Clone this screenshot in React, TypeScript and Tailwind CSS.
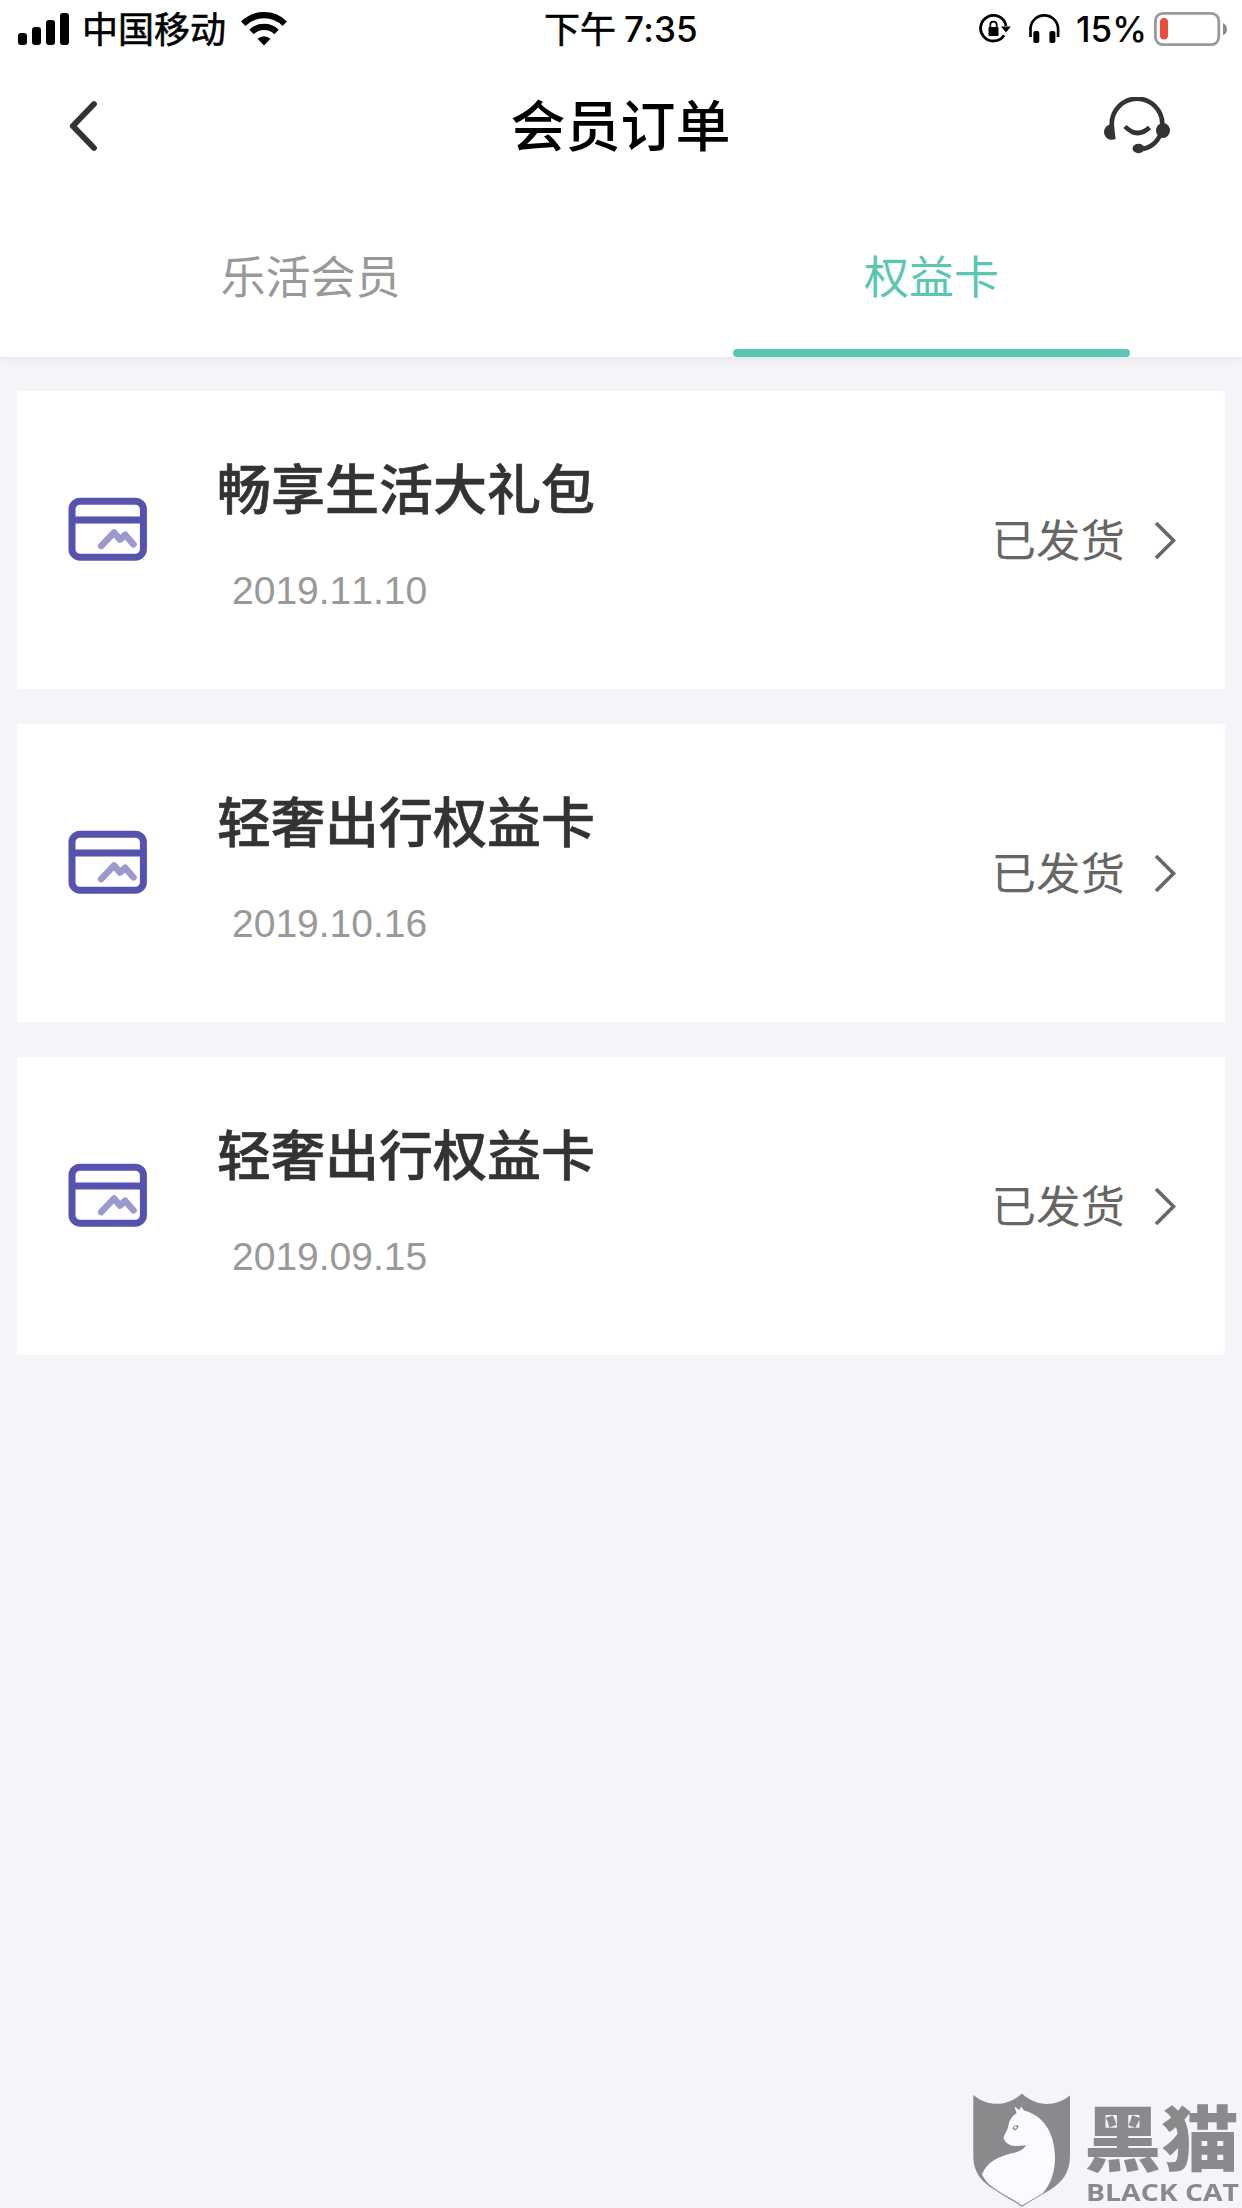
import { ReactNode } from "react";

const orders = [
	{ id: 1, title: "畅享生活大礼包", date: "2019.11.10", status: "已发货" },
	{ id: 2, title: "轻奢出行权益卡", date: "2019.10.16", status: "已发货" },
	{ id: 3, title: "轻奢出行权益卡", date: "2019.09.15", status: "已发货" },
];

function StatusBar() {
	return (
		<div className="flex h-[58px] items-center text-[36px] leading-[58px] text-black">
			<div className="flex flex-1 items-center pl-[18px]">
				<svg width="52" height="34" viewBox="0 0 52 34">
					<rect x="0" y="21" width="9" height="12" rx="3" />
					<rect x="14" y="15" width="9" height="18" rx="3" />
					<rect x="28" y="8" width="9" height="25" rx="3" />
					<rect x="42" y="1" width="9" height="32" rx="3" />
				</svg>
				<span className="ml-[12px] pb-[3px] leading-[55px] [-webkit-text-stroke:0.6px_#000]">中国移动</span>
				<svg className="ml-[15px]" width="46" height="34" viewBox="0 0 46 34">
					<path d="M2.3 11.7a29.5 29.5 0 0 1 41.4 0" fill="none" stroke="#000" strokeWidth="6.3" />
					<path d="M10.5 20a18 18 0 0 1 25 0" fill="none" stroke="#000" strokeWidth="6.3" />
					<path d="M16.5 26.7a9.6 9.6 0 0 1 13 0L23 33.4z" />
				</svg>
			</div>
			<div className="flex items-center pr-[4px]">
				<span className="pb-[3px] leading-[55px] [-webkit-text-stroke:0.6px_#000]">下午</span>
				<span className="ml-[8px] font-['Inter'] text-[35px] font-medium tracking-[0.2px]">7:35</span>
			</div>
			<div className="flex flex-1 items-center justify-end pr-[14px]">
				<svg width="32" height="30" viewBox="0 0 32 30">
					<path d="M25.1 21.2A12.8 12.8 0 1 1 27 12" fill="none" stroke="#000" strokeWidth="2.8" />
					<path d="M22 12.5h9.8L27 18.6z" />
					<rect x="9.5" y="13" width="10" height="9" rx="1" />
					<path d="M11.3 13.5v-2.6a3.2 3.2 0 0 1 6.4 0v2.6" fill="none" stroke="#000" strokeWidth="1.7" />
				</svg>
				<svg className="ml-[18px]" width="31" height="30" viewBox="0 0 31 30">
					<path d="M1.5 23V15a13.8 13.6 0 0 1 27.6 0V23" fill="none" stroke="#000" strokeWidth="2.7" />
					<rect x="4.3" y="17" width="6" height="12" rx="2" />
					<rect x="20.4" y="17" width="6" height="12" rx="2" />
				</svg>
				<span className="ml-[16px] font-['Inter'] text-[35px] font-medium">15%</span>
				<svg className="ml-[7px]" width="74" height="34" viewBox="0 0 74 34">
					<rect x="1.4" y="1.4" width="63.4" height="31.2" rx="7.5" fill="none" stroke="#999" strokeWidth="2.8" />
					<rect x="6" y="6" width="8" height="21.5" rx="4" fill="#eb4d3d" />
					<path d="M69 11q4 2 4 6.2t-4 6.2z" fill="#8c8c8c" />
				</svg>
			</div>
		</div>
	);
}

function NavBar() {
	return (
		<div className="flex h-[136px] items-center justify-between pr-[70px] pl-[68px]">
			<svg width="70" height="54" viewBox="0 0 70 54" fill="none" stroke="#333" strokeWidth="5.8" strokeLinecap="round" strokeLinejoin="round">
				<path d="M26 5L4.800 27 26 49" />
			</svg>
			<h1 className="pb-[7px] pl-px text-[55px] leading-none font-medium text-black">会员订单</h1>
			<svg width="70" height="58" viewBox="0 0 70 58">
				<g fill="none" stroke="#333" strokeWidth="4.6">
					<path d="M9.700 30.500V27a25.300 25.300 0 0 1 50.600 0c0 13-8 22.600-19.300 25" />
					<path d="M23 29.500q12 12.500 24.500 1" />
				</g>
				<path d="M12 27.500c-5-1-9.800 2-10 7.500 0 5.500 5.500 9.600 11.600 7z" fill="#333" />
				<ellipse cx="61" cy="33.500" rx="7" ry="7.500" fill="#333" />
				<ellipse cx="36.500" cy="51.500" rx="6" ry="4.700" fill="#333" />
			</svg>
		</div>
	);
}

function Tab({ active, children }: { active?: boolean; children: ReactNode }) {
	return (
		<div className="flex h-[163px] w-[621px] flex-col items-center justify-between">
			<span className={active ? "pt-[58px] text-[45px] leading-[45px] text-[#5bc6b4]" : "pt-[58px] text-[45px] leading-[45px] text-[#999]"}>
				{children}
			</span>
			{active && <div className="h-[8px] w-[397px] rounded-full bg-[#5bc6b4]" />}
		</div>
	);
}

function CardIcon() {
	return (
		<svg width="80" height="64" viewBox="0 0 80 64" fill="none">
			<rect x="4" y="4.200" width="71.400" height="56" rx="8" stroke="#5553ad" strokeWidth="7" />
			<path d="M4 23h71" stroke="#5553ad" strokeWidth="6.800" />
			<path d="M33.200 49L46 35.500l6 7 5.200-4.700 8.300 9.500" stroke="#9c9acd" strokeWidth="6.600" strokeLinecap="round" strokeLinejoin="round" />
		</svg>
	);
}

function OrderCard(props: any) {
	return (
		<div className="flex h-[298px] bg-white">
			<div className="w-[200px] pt-[106px] pl-[51px]">
				<CardIcon />
			</div>
			<div className="flex-1 pt-[69px]">
				<p className="text-[54px] leading-[54px] font-medium text-[#333] [-webkit-text-stroke:0.6px_#333]">{props.data.title}</p>
				<p className="mt-[55px] ml-[15px] font-['Liberation_Sans'] text-[39px] leading-[44px] text-[#999] [font-kerning:none]">
					{props.data.date}
				</p>
			</div>
			<div className="flex items-center pr-[47px]">
				<span className="pb-[5px] text-[44.5px] leading-[45px] text-[#666]">{props.data.status}</span>
				<svg className="ml-[29px]" width="24" height="40" viewBox="0 0 24 40" fill="none" stroke="#666" strokeWidth="3.600">
					<path d="M2 3L19.500 20.500 2 38" />
				</svg>
			</div>
		</div>
	);
}

function Watermark() {
	return (
		<div className="fixed right-0 bottom-0 flex h-[128px] w-[282px] text-[#8c898c]">
			<svg width="124" height="128" viewBox="0 0 124 128">
				{/* shield */}
				<path
					d="M13.300 15c16 13 35 11 48.700-1.500C75.500 26 94 28 110 15.500V76c0 17-8 26-20 34-10 6-20 11-28 17-8-6-17-10-27-17C22 102 13.300 93 13.300 76z"
					fill="currentColor"
				/>
				{/* cat */}
				<path
					d="M54.500 26.500l5 3.500 1.500-3.500 3 4c20 5 30.500 23 31 46 .3 15-4.500 28-12 36.500L62 125.500c-8-6-17-10-26-16C29 105 24.500 100 22 94.500c5-13 16-17.500 29-21 7-1.800 12-3 15-8.300-6 .8-12 1-15.500 0-4-1.700-6.500-4.500-7-8 1.800-4 4.500-8 5-12 .8-5.500 3.500-9 8-12z"
					fill="#fbfaff"
				/>
				<path d="M52.500 48.500c1-3 3-3.500 6-3-.3 3-2 5.500-4.500 4.500z" fill="currentColor" />
				<circle cx="55.500" cy="47.500" r="1.200" fill="#fff" />
			</svg>
			<div className="flex flex-1 flex-col pt-[16px]">
				<p className="origin-left scale-x-[1.09] text-[71px] leading-[76px] font-black whitespace-nowrap">黑猫</p>
				<svg className="mt-[8px] overflow-visible" width="158" height="28" viewBox="0 0 158 28">
					<text x="2" y="20.500" textLength="153" lengthAdjust="spacingAndGlyphs" fill="currentColor" className="font-['Open_Sans'] text-[23.5px] font-bold">
						BLACK CAT
					</text>
				</svg>
			</div>
		</div>
	);
}

function App() {
	return (
		<div className="min-h-screen bg-[#f4f4f9] font-['Noto_Sans_CJK_SC',sans-serif]">
			<div className="bg-white shadow-[0_2px_8px_rgba(0,0,0,0.07)]">
				<StatusBar />
				<NavBar />
				<div className="flex">
					<Tab>乐活会员</Tab>
					<Tab active>权益卡</Tab>
				</div>
			</div>
			<div className="mt-[34px] flex flex-col gap-[35px] px-[17px]">
				{orders.map((order) => (
					<OrderCard key={order.id} data={order} />
				))}
			</div>
			<Watermark />
		</div>
	);
}

export default App;
